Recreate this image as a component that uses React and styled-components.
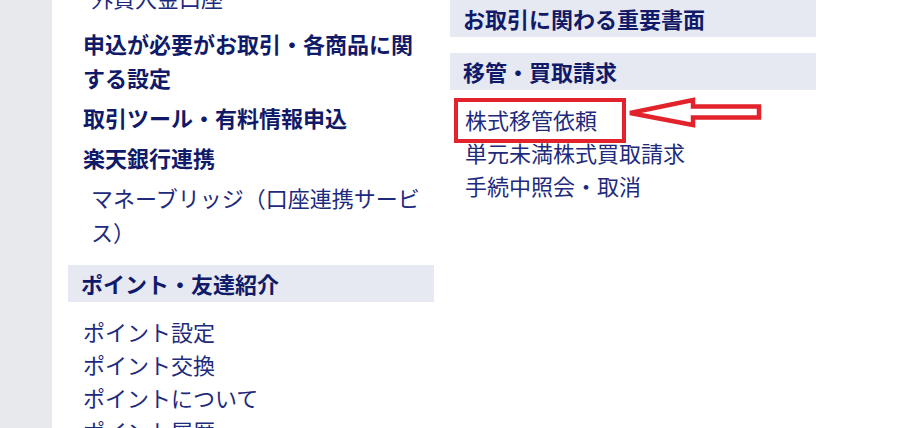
import React from "react";
import styled, { createGlobalStyle } from "styled-components";

const GlobalStyle = createGlobalStyle`
  html, body {
    margin: 0;
    padding: 0;
    background: #fff;
  }
  body {
    font-family: "Noto Sans CJK JP", "Noto Sans", sans-serif;
  }
  * {
    box-sizing: border-box;
  }
`;

const leftLinks = [
  { label: "外貨入金口座", sub: true, gap: 12 },
  { label: "申込が必要がお取引・各商品に関する設定" },
  { label: "取引ツール・有料情報申込" },
  { label: "楽天銀行連携" },
  { label: "マネーブリッジ（口座連携サービス）", sub: true, gap: 17 },
];

const pointLinks = ["ポイント設定", "ポイント交換", "ポイントについて", "ポイント履歴"];

const transferLinks = ["株式移管依頼", "単元未満株式買取請求", "手続中照会・取消"];

const ArrowMark = () => (
  <ArrowSvg width="150" height="50" viewBox="0 0 150 50">
    <polygon
      points="9,23 72,10 72,16.5 138,16.5 138,27.5 72,27.5 72,35"
      fill="#fff"
      stroke="#e3232b"
      strokeWidth="4.5"
      strokeLinejoin="miter"
    />
  </ArrowSvg>
);

const App = () => {
  return (
    <>
      <GlobalStyle />
      <Page>
        <Sidebar />
        <Main>
          <Column $offset={-20}>
            {leftLinks.map((item) => (
              <MenuLink key={item.label} $sub={item.sub} $gap={item.gap}>
                {item.label}
              </MenuLink>
            ))}
            <SectionHead>ポイント・友達紹介</SectionHead>
            <LinkList>
              {pointLinks.map((label) => (
                <LinkItem key={label}>{label}</LinkItem>
              ))}
            </LinkList>
          </Column>

          <Column>
            <SectionHead $gap={16}>お取引に関わる重要書面</SectionHead>
            <SectionHead>移管・買取請求</SectionHead>
            <LinkList>
              {transferLinks.map((label, i) => (
                <LinkItem key={label}>
                  {label}
                  {i === 0 && (
                    <>
                      <HighlightBox />
                      <ArrowMark />
                    </>
                  )}
                </LinkItem>
              ))}
            </LinkList>
          </Column>
        </Main>
      </Page>
    </>
  );
};

const Page = styled.div`
  display: flex;
  height: 428px;
  overflow: hidden;
  background: #fff;
`;

const Sidebar = styled.aside`
  width: 52px;
  flex-shrink: 0;
  background: #e8e9ed;
`;

const Main = styled.main`
  display: flex;
  align-items: flex-start;
  gap: 16px;
  padding-left: 16px;
`;

const Column = styled.section`
  width: 366px;
  margin-top: ${(p) => p.$offset || 0}px;
`;

const MenuLink = styled.div`
  padding-left: ${(p) => (p.$sub ? 23 : 15)}px;
  margin-bottom: ${(p) => p.$gap || 6}px;
  font-size: 22px;
  line-height: 34px;
  font-weight: ${(p) => (p.$sub ? 400 : 700)};
  color: ${(p) => (p.$sub ? "#1e2a7c" : "#101a68")};
`;

const SectionHead = styled.h3`
  margin: 0 0 ${(p) => p.$gap || 0}px;
  height: 37px;
  padding-left: 13px;
  background: #e6e8f2;
  font-size: 22px;
  line-height: 37px;
  font-weight: 700;
  color: #101a68;
`;

const LinkList = styled.ul`
  list-style: none;
  margin: 0;
  padding: 13px 0 0;
`;

const LinkItem = styled.li`
  position: relative;
  padding-left: 15px;
  font-size: 22px;
  line-height: 33px;
  color: #1e2a7c;
`;

const HighlightBox = styled.span`
  position: absolute;
  left: 4px;
  top: -5px;
  width: 172px;
  height: 45px;
  border: 4px solid #e3232b;
`;

const ArrowSvg = styled.svg`
  position: absolute;
  left: 171px;
  top: -13px;
`;

export default App;
